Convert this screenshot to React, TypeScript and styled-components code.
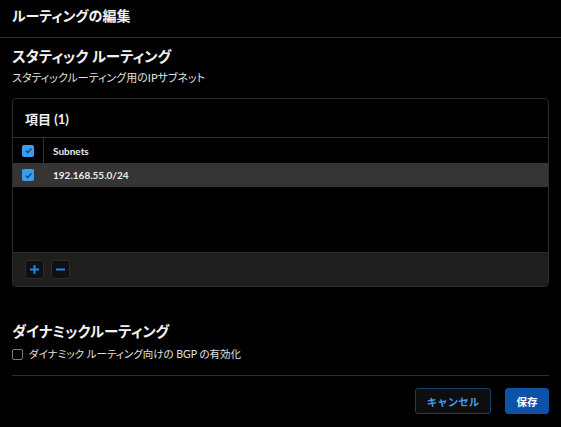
import React from "react";
import styled, { createGlobalStyle } from "styled-components";

const Global = createGlobalStyle`
  html, body { margin: 0; padding: 0; background: #000; }
  body {
    font-family: "Lato", "Noto Sans CJK JP", sans-serif;
    color: #e6e6e6;
    font-feature-settings: "palt";
  }
  * { box-sizing: border-box; }
`;

const Page = styled.div`
  width: 561px;
  height: 427px;
  background: #000;
  display: flex;
  flex-direction: column;
`;

const Header = styled.header`
  height: 38px;
  padding: 6px 12px 0;
  border-bottom: 1px solid #2e2e2e;
`;

const Title = styled.h1`
  margin: 0;
  font-size: 14px;
  line-height: 20px;
  font-weight: 700;
  color: #f2f2f2;
`;

const Body = styled.div`
  padding: 0 12px;
  display: flex;
  flex-direction: column;
`;

const SectionTitle = styled.h2<{ $top: number }>`
  margin: ${(p) => p.$top}px 0 0;
  font-size: 14.5px;
  line-height: 20px;
  font-weight: 700;
  color: #f2f2f2;
`;

const SubText = styled.p`
  margin: 3px 0 0;
  font-size: 11px;
  line-height: 16px;
  color: #e0e0e0;
`;

const Card = styled.div`
  margin-top: 12px;
  border: 1px solid #2b2b2b;
  border-radius: 4px;
  display: flex;
  flex-direction: column;
  overflow: hidden;
`;

const CardHeader = styled.div`
  height: 39px;
  padding: 0 12px;
  display: flex;
  align-items: center;
  border-bottom: 1px solid #333;
  font-size: 13px;
  font-weight: 700;
  color: #f0f0f0;
`;

const Row = styled.div<{ $selected?: boolean; $h: number }>`
  display: flex;
  height: ${(p) => p.$h}px;
  background: ${(p) => (p.$selected ? "#353535" : "transparent")};
`;

const CheckCell = styled.div`
  width: 31px;
  border-right: 1px solid #333;
  display: flex;
  align-items: center;
  justify-content: center;
`;

const TextCell = styled.div`
  flex: 1;
  padding-left: 9px;
  display: flex;
  align-items: center;
  font-size: 10px;
  font-weight: 700;
  color: #ececec;
`;

const Empty = styled.div`
  height: 65px;
`;

const CardFooter = styled.div`
  height: 34px;
  background: #1e1e1e;
  border-top: 1px solid #2b2b2b;
  padding: 0 12px;
  display: flex;
  align-items: center;
  gap: 7px;
`;

const IconButton = styled.button`
  width: 19px;
  height: 19px;
  padding: 0;
  border: 1px solid #2c2c2c;
  border-radius: 3px;
  background: #101010;
  display: flex;
  align-items: center;
  justify-content: center;
  cursor: pointer;
`;

const BlueBox = styled.span`
  width: 12px;
  height: 12px;
  border-radius: 2px;
  background: #3a9cf0;
  display: flex;
  align-items: center;
  justify-content: center;
`;

const EmptyBox = styled.span`
  width: 11px;
  height: 11px;
  border-radius: 2px;
  border: 1px solid #7a7a7a;
  background: transparent;
`;

const CheckRow = styled.label`
  margin-top: 6px;
  display: flex;
  align-items: center;
  gap: 6px;
  font-size: 10.5px;
  line-height: 13px;
  color: #e0e0e0;
`;

const Divider = styled.hr`
  margin: 14px 0 0;
  border: none;
  border-top: 1px solid #2e2e2e;
`;

const Actions = styled.div`
  margin-top: 12px;
  display: flex;
  justify-content: flex-end;
  gap: 14px;
`;

const Button = styled.button<{ $primary?: boolean }>`
  height: 26px;
  width: ${(p) => (p.$primary ? 44 : 76)}px;
  padding: 0;
  border-radius: 3px;
  border: 1px solid ${(p) => (p.$primary ? "#0c52a8" : "#15406e")};
  background: ${(p) => (p.$primary ? "#0c52a8" : "#0e0e0e")};
  color: ${(p) => (p.$primary ? "#ffffff" : "#4a9be8")};
  font-family: inherit;
  font-size: 10.5px;
  font-weight: 700;
  cursor: pointer;
`;

const Check = () => (
  <BlueBox>
    <svg width="9" height="9" viewBox="0 0 10 10">
      <path d="M2 5.2 L4.2 7.3 L8.2 2.8" fill="none" stroke="#0f3f70" strokeWidth="1.4" />
    </svg>
  </BlueBox>
);

export default function App() {
  return (
    <Page>
      <Global />
      <Header>
        <Title>ルーティングの編集</Title>
      </Header>
      <Body>
        <SectionTitle $top={9}>スタティック ルーティング</SectionTitle>
        <SubText>スタティックルーティング用のIPサブネット</SubText>
        <Card>
          <CardHeader>項目 (1)</CardHeader>
          <Row $h={25}>
            <CheckCell>
              <Check />
            </CheckCell>
            <TextCell>Subnets</TextCell>
          </Row>
          <Row $h={24} $selected>
            <CheckCell>
              <Check />
            </CheckCell>
            <TextCell>192.168.55.0/24</TextCell>
          </Row>
          <Empty />
          <CardFooter>
            <IconButton aria-label="追加">
              <svg width="11" height="11" viewBox="0 0 11 11">
                <path d="M5.5 1 V10 M1 5.5 H10" stroke="#1f86e8" strokeWidth="2" />
              </svg>
            </IconButton>
            <IconButton aria-label="削除">
              <svg width="11" height="11" viewBox="0 0 11 11">
                <path d="M1 5.5 H10" stroke="#1f86e8" strokeWidth="2" />
              </svg>
            </IconButton>
          </CardFooter>
        </Card>
        <SectionTitle $top={35}>ダイナミックルーティング</SectionTitle>
        <CheckRow>
          <EmptyBox />
          ダイナミック ルーティング向けの BGP の有効化
        </CheckRow>
        <Divider />
        <Actions>
          <Button>キャンセル</Button>
          <Button $primary>保存</Button>
        </Actions>
      </Body>
    </Page>
  );
}
